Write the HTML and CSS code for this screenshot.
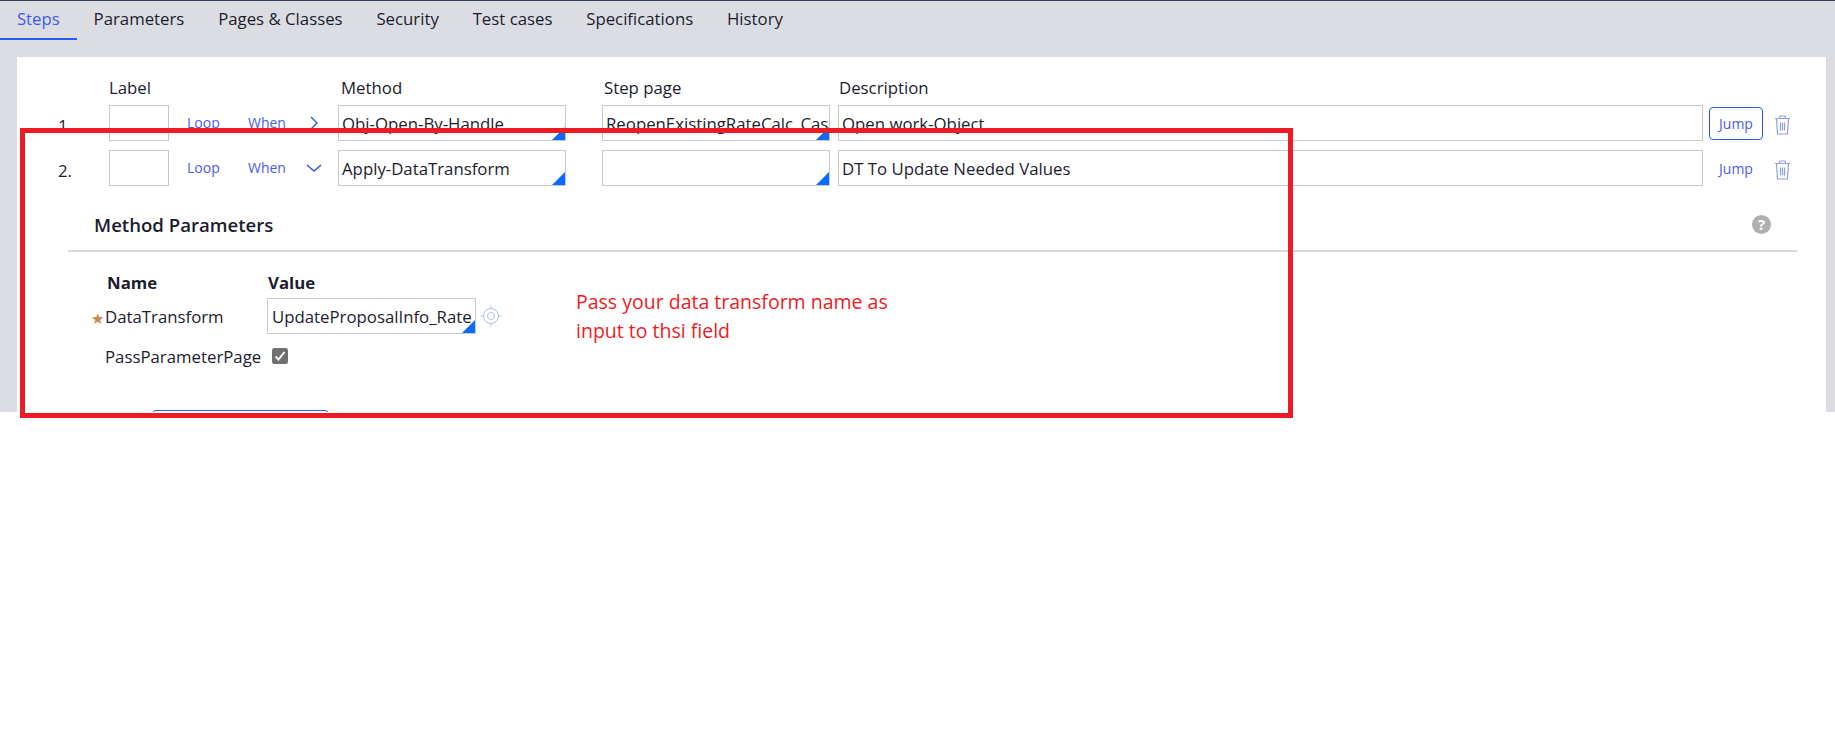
FILE: index.html
```html
<!DOCTYPE html>
<html lang="en">
<head>
    <meta charset="UTF-8">
    <title>Activity</title>
    <link rel="stylesheet" href="styles.css">
</head>
<body>
    <div class="main-wrapper">
        <div class="tabs">
            <div class="tab active">Steps</div>
            <div class="tab">Parameters</div>
            <div class="tab">Pages &amp; Classes</div>
            <div class="tab">Security</div>
            <div class="tab">Test cases</div>
            <div class="tab">Specifications</div>
            <div class="tab">History</div>
        </div>

        <div class="card">
            <div class="row head-row">
                <div class="col-num"></div>
                <div class="col-label">Label</div>
                <div class="col-loop"></div>
                <div class="col-when"></div>
                <div class="col-arrow"></div>
                <div class="col-method">Method</div>
                <div class="col-page">Step page</div>
                <div class="col-desc">Description</div>
            </div>

            <div class="row step-row">
                <div class="col-num">1.</div>
                <div class="col-label field"></div>
                <div class="col-loop link">Loop</div>
                <div class="col-when link">When</div>
                <div class="col-arrow">
                    <svg width="8" height="14" viewBox="0 0 8 14"><path d="M1 1 L7 7 L1 13" fill="none" stroke="#3557d8" stroke-width="1.4"/></svg>
                </div>
                <div class="col-method field picker">Obj-Open-By-Handle</div>
                <div class="col-page field picker">ReopenExistingRateCalc_Case</div>
                <div class="col-desc field">Open work-Object</div>
                <div class="col-jump jump-btn">Jump</div>
                <div class="col-trash">
                    <svg width="17" height="20" viewBox="0 0 17 20"><path d="M1 3.5 H16 M5.5 3.5 L6 1 H11 L11.5 3.5 M2.5 3.5 L3.5 19 H13.5 L14.5 3.5 M6.5 7.5 V15.5 M8.5 7.5 V15.5 M10.5 7.5 V15.5" fill="none" stroke="#8f9fee" stroke-width="1.2"/></svg>
                </div>
            </div>

            <div class="row step-row">
                <div class="col-num">2.</div>
                <div class="col-label field"></div>
                <div class="col-loop link">Loop</div>
                <div class="col-when link">When</div>
                <div class="col-arrow">
                    <svg width="16" height="8" viewBox="0 0 16 8"><path d="M1 1 L8 7 L15 1" fill="none" stroke="#3557d8" stroke-width="1.4"/></svg>
                </div>
                <div class="col-method field picker">Apply-DataTransform</div>
                <div class="col-page field picker"></div>
                <div class="col-desc field">DT To Update Needed Values</div>
                <div class="col-jump jump-plain">Jump</div>
                <div class="col-trash">
                    <svg width="17" height="20" viewBox="0 0 17 20"><path d="M1 3.5 H16 M5.5 3.5 L6 1 H11 L11.5 3.5 M2.5 3.5 L3.5 19 H13.5 L14.5 3.5 M6.5 7.5 V15.5 M8.5 7.5 V15.5 M10.5 7.5 V15.5" fill="none" stroke="#8f9fee" stroke-width="1.2"/></svg>
                </div>
            </div>

            <div class="section-head">
                <div class="section-title">Method Parameters</div>
                <div class="help-icon">?</div>
            </div>

            <div class="params">
                <div class="param-title name-title">Name</div>
                <div class="param-title">Value</div>

                <div class="param-name">
                    <span class="star">★</span>DataTransform
                </div>
                <div class="param-value">
                    <div class="field picker value-field">UpdateProposalInfo_Rate</div>
                    <svg class="target" width="22" height="22" viewBox="0 0 22 22"><g fill="none" stroke="#b0bcf5" stroke-width="1"><circle cx="11" cy="11" r="7.5"/><circle cx="11" cy="11" r="3.5"/><path d="M11 0.5 V3.5 M11 18.5 V21.5 M0.5 11 H3.5 M18.5 11 H21.5"/></g></svg>
                </div>

                <div class="param-name">PassParameterPage</div>
                <div class="param-value">
                    <svg class="check" width="16" height="16" viewBox="0 0 16 16"><rect width="16" height="16" rx="2.5" fill="#707070"/><path d="M3.5 8.5 L6.5 11.5 L12.5 4" fill="none" stroke="#fff" stroke-width="2"/></svg>
                </div>
            </div>

            <div class="add-btn"></div>
        </div>
    </div>

    <div class="red-box"></div>
    <div class="note">Pass your data transform name as<br>input to thsi field</div>
</body>
</html>
```

FILE: styles.css
```css
body {
    margin: 0;
    background: #fff;
    color: #1b1c2e;
    font-family: "Open Sans", "Liberation Sans", sans-serif;
    font-size: 16.8px;
    overflow: hidden;
}

.main-wrapper {
    height: 411px;
    overflow: hidden;
    background: #dcdde2;
    border-top: 1px solid #3c3f55;
    padding: 0 9px 0 17px;
}

.tabs {
    display: flex;
    height: 39px;
    margin-left: -17px;
    margin-bottom: 17px;
}

.tab {
    padding: 0 16.9px;
    line-height: 36px;
    height: 39px;
    box-sizing: border-box;
}

.tab.active {
    color: #3b5bf0;
    border-bottom: 2px solid #2a5bf0;
}

.card {
    background: #fff;
    padding-top: 19px;
    height: 500px;
}

.row {
    display: flex;
    align-items: center;
}

.head-row {
    height: 22px;
    margin-bottom: 7px;
}

.step-row {
    height: 36px;
    margin-bottom: 9px;
}

.col-num {
    width: 92px;
    padding-left: 41px;
    padding-top: 4px;
    box-sizing: border-box;
    flex: none;
}

.col-label {
    width: 60px;
    flex: none;
}

.col-loop {
    width: 61px;
    margin-left: 18px;
    flex: none;
}

.col-when {
    width: 56px;
    flex: none;
}

.col-arrow {
    width: 34px;
    padding-right: 14px;
    box-sizing: border-box;
    flex: none;
    display: flex;
    justify-content: center;
}

.col-method {
    width: 228px;
    flex: none;
}

.col-page {
    width: 228px;
    margin-left: 36px;
    flex: none;
}

.col-desc {
    width: 865px;
    margin-left: 8px;
    flex: none;
}

.head-row .col-method {
    padding-left: 3px;
    box-sizing: border-box;
}

.head-row .col-page {
    padding-left: 2px;
    box-sizing: border-box;
}

.head-row .col-desc {
    padding-left: 1px;
    box-sizing: border-box;
}

.field {
    position: relative;
    height: 36px;
    line-height: 35px;
    border: 1px solid #c8c8c8;
    box-sizing: border-box;
    padding: 0 3px;
    white-space: nowrap;
    overflow: hidden;
}

.picker::after {
    content: "";
    position: absolute;
    right: 0;
    bottom: 0;
    border-style: solid;
    border-width: 0 0 13px 13px;
    border-color: transparent transparent #0b6bff transparent;
}

.link {
    color: #4a5cf0;
    font-size: 14px;
    margin-bottom: 2px;
}

.col-jump {
    width: 54px;
    height: 33px;
    margin-left: 6px;
    box-sizing: border-box;
    text-align: center;
    line-height: 31px;
    font-size: 14px;
    color: #4a5cf0;
    flex: none;
}

.jump-btn {
    border: 1px solid #2a5bf0;
    border-radius: 4px;
}

.jump-plain {
    border: 1px solid transparent;
}

.col-trash {
    margin-left: 11px;
    margin-top: 4px;
    width: 17px;
    display: flex;
    flex: none;
}

.section-head {
    display: flex;
    justify-content: space-between;
    align-items: center;
    margin: 16px 29px 0 51px;
    padding: 0 26px;
    height: 48px;
    border-bottom: 2px solid #d8d9de;
}

.section-head .section-title {
    margin-top: -4px;
}

.section-head .help-icon {
    margin-top: -4px;
}

.section-title {
    font-size: 18.6px;
    font-weight: 600;
}

.help-icon {
    width: 19px;
    height: 19px;
    border-radius: 50%;
    background: #b0b0b0;
    color: #fff;
    font-size: 15px;
    font-weight: 700;
    line-height: 19px;
    text-align: center;
}

.params {
    display: grid;
    grid-template-columns: 162px 1fr;
    grid-template-rows: 23px 36px 36px;
    row-gap: 4px;
    align-items: center;
    padding-left: 88px;
    margin-top: 19px;
}

.param-title {
    font-weight: 700;
    padding-left: 1px;
    line-height: 23px;
    align-self: start;
}

.name-title {
    padding-left: 2px;
}

.param-name {
    position: relative;
}

.star {
    position: absolute;
    left: -14px;
    top: 3px;
    color: #c8884a;
    font-size: 15px;
}

.param-value {
    display: flex;
    align-items: center;
}

.value-field {
    width: 209px;
    padding: 0 4px;
}

.target {
    margin-left: 4px;
}

.check {
    margin-left: 5px;
}

.add-btn {
    width: 177px;
    height: 36px;
    margin: 36px 0 0 135px;
    border: 1px solid #2a5bf0;
    border-radius: 4px;
    box-sizing: border-box;
}

.red-box {
    position: absolute;
    left: 20px;
    top: 128px;
    width: 1273px;
    height: 290px;
    border: 5px solid #ed1c24;
    box-sizing: border-box;
}

.note {
    position: absolute;
    left: 576px;
    top: 287px;
    color: #ed1c24;
    font-size: 19.5px;
    line-height: 29px;
}
```
